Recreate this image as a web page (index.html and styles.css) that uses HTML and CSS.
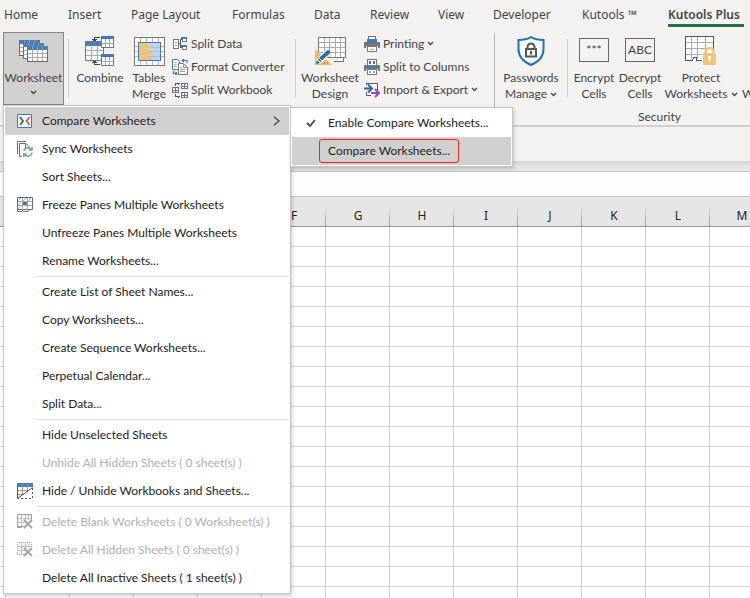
FILE: index.html
```html
<!DOCTYPE html>
<html lang="en">
<head>
<meta charset="utf-8">
<title>Kutools Plus</title>
<link rel="stylesheet" href="styles.css">
</head>
<body>
<nav class="tabs">
  <a href="#">Home</a><a href="#">Insert</a><a href="#">Page Layout</a><a href="#">Formulas</a><a href="#">Data</a><a href="#">Review</a><a href="#">View</a><a href="#">Developer</a><a href="#">Kutools ™</a><a href="#" class="active">Kutools Plus</a>
</nav>

<header class="ribbon">
  <div class="anchor">
    <button class="big pressed" aria-expanded="true">
      <svg class="icon" width="30" height="30" viewBox="0 0 30 30" shape-rendering="crispEdges">
        <g id="sheet"><path fill="#fff" stroke="#6b6b6b" d="M.5 4.500h20v15H.5z"/><path stroke="#aaa" d="M1 11.500h19M1 15.500h19M5.500 8v11M10.500 8v11M15.500 8v11"/><path fill="#4d7fb2" d="M0 4h21v4H0z"/><path stroke="#7ca0c5" d="M5.500 4v4M10.500 4v4M15.500 4v4"/></g>
        <use href="#sheet" x="4" y="3"/><use href="#sheet" x="8" y="6"/>
      </svg>
      <span>Worksheet</span>
      <svg class="chev" width="7" height="5" viewBox="0 0 7 5"><path d="M1 1l2.500 2.500L6 1"/></svg>
    </button>

    <div class="menu" role="menu">
      <div class="anchor">
        <button class="item hot" role="menuitem">
          <svg class="icon" width="16" height="16" viewBox="0 0 16 16"><path fill="#fff" stroke="#3f79b8" d="M.5 1.500h14v13H.5z"/><path fill="none" stroke="#1f7346" stroke-width="1.800" d="M3 4l3 4-3 4"/><path fill="none" stroke="#d9593b" stroke-width="1.800" d="M12.500 4l-3 4 3 4"/></svg>
          <span>Compare Worksheets</span>
          <svg class="more" width="8" height="10" viewBox="0 0 8 10"><path fill="none" stroke="#444" stroke-width="1.300" d="M1 .8L6 5 1 9.200"/></svg>
        </button>
        <div class="menu submenu" role="menu">
          <button class="item" role="menuitemcheckbox" aria-checked="true">
            <svg class="icon" width="16" height="16" viewBox="0 0 16 16"><path fill="none" stroke="#444" stroke-width="1.800" d="M4 8l3 3 5-6"/></svg>
            <span>Enable Compare Worksheets...</span>
          </button>
          <button class="item hot" role="menuitem"><span class="marked">Compare Worksheets...</span></button>
        </div>
      </div>
      <button class="item" role="menuitem">
        <svg class="icon" width="16" height="16" viewBox="0 0 16 16"><path fill="none" stroke="#6b6b6b" d="M.5 13V.5H9M5 15.500H2.500v-13H9L12.500 6M8.500 3v3.500H11"/><g fill="none" stroke="#69a98e" stroke-width="1.500"><path d="M6.800 10a4.300 4.300 0 0 1 7.700-1.500M15 11.500a4.300 4.300 0 0 1-7.700 2"/><path d="M15 6v3h-3M6.800 16v-3h3"/></g></svg>
        <span>Sync Worksheets</span>
      </button>
      <button class="item" role="menuitem"><span>Sort Sheets...</span></button>
      <button class="item" role="menuitem">
        <svg class="icon" width="16" height="16" viewBox="0 0 16 16"><path fill="#fff" stroke="#6b6b6b" d="M.5.5h15v12H.5z"/><path stroke="#9ebbd8" d="M1 4l3-3M1 8l3-3M1 12l3-3M6 4l3-3M11 4l3-3"/><path stroke="#aaa" d="M1 4.500h14M1 8.500h14M5.500 1v12M10.500 1v12"/><path fill="#3f79b8" d="M6 5h4v3H6z"/><path fill="none" stroke="#6b6b6b" d="M.5 12v2.500H5l1-2M6 14.500h5l2-2"/></svg>
        <span>Freeze Panes Multiple Worksheets</span>
      </button>
      <button class="item" role="menuitem"><span>Unfreeze Panes Multiple Worksheets</span></button>
      <button class="item" role="menuitem"><span>Rename Worksheets...</span></button>
      <hr>
      <button class="item" role="menuitem"><span>Create List of Sheet Names...</span></button>
      <button class="item" role="menuitem"><span>Copy Worksheets...</span></button>
      <button class="item" role="menuitem"><span>Create Sequence Worksheets...</span></button>
      <button class="item" role="menuitem"><span>Perpetual Calendar...</span></button>
      <button class="item" role="menuitem"><span>Split Data...</span></button>
      <hr>
      <button class="item" role="menuitem"><span>Hide Unselected Sheets</span></button>
      <button class="item" role="menuitem" disabled><span>Unhide All Hidden Sheets ( 0 sheet(s) )</span></button>
      <button class="item" role="menuitem">
        <svg class="icon" width="16" height="16" viewBox="0 0 16 16"><path fill="#fff" d="M0 0h16v16H0z"/><path stroke="#999" d="M0 7.500h12M0 11.500h7M5.500 4v8M10.500 4v5"/><path fill="none" stroke="#555" d="M.5 4v11.500L15.500 4.500"/><path fill="none" stroke="#555" stroke-dasharray="2 2" d="M15.500 5v10.500H1"/><path fill="#4d7fb2" d="M0 0h16v4H0z"/><path stroke="#7ca0c5" d="M5.500 1v3M10.500 1v3"/></svg>
        <span>Hide / Unhide Workbooks and Sheets...</span>
      </button>
      <hr>
      <button class="item" role="menuitem" disabled>
        <svg class="icon" width="16" height="16" viewBox="0 0 16 16"><path fill="#f4f4f4" stroke="#a6a6a6" d="M7 12.500H.5V.5h14V6M.5 12v1.500H5"/><path stroke="#c4c4c4" d="M1 4.500h13M1 8.500h7M4.500 1v11M8.500 1v6M11.500 1v5"/><path stroke="#a6a6a6" stroke-width="2" d="M7 6l8 8M15 6l-8 8"/></svg>
        <span>Delete Blank Worksheets ( 0 Worksheet(s) )</span>
      </button>
      <button class="item" role="menuitem" disabled>
        <svg class="icon" width="16" height="16" viewBox="0 0 16 16"><path fill="#f4f4f4" stroke="#a6a6a6" stroke-dasharray="1 1" d="M7 12.500H.5V.5h14V6"/><path stroke="#c4c4c4" d="M1 4.500h13M1 8.500h7M4.500 1v11M8.500 1v6M11.500 1v5"/><path stroke="#a6a6a6" stroke-width="2" d="M7 6l8 8M15 6l-8 8"/></svg>
        <span>Delete All Hidden Sheets ( 0 sheet(s) )</span>
      </button>
      <button class="item" role="menuitem"><span>Delete All Inactive Sheets ( 1 sheet(s) )</span></button>
    </div>
  </div>

  <i class="rule"></i>
  <button class="big combine">
    <svg class="icon" width="30" height="30" viewBox="0 0 30 30" shape-rendering="crispEdges">
      <path fill="#f3f7fc" stroke="#777" d="M.5 5.500h18v19H.5z"/><path stroke="#aaa" d="M1 14.500h17M1 19.500h17M6.500 9v15M12.500 9v15"/><path fill="#4d7fb2" d="M0 5h19v5H0z"/>
      <g id="mini"><path fill="#fff" stroke="#777" d="M16.500.5h12v11h-12z"/><path stroke="#aaa" d="M17 7.500h11M20.500 3v8M24.500 3v8"/><path fill="#3f79b8" d="M16 0h13v3H16z"/></g><use href="#mini" y="18"/>
      <path fill="none" stroke="#444" d="M15 1.500H9.500V5M15 28.500H9.500V25"/><path fill="#444" d="M7 3h5v1H7zM8 4h3v1H8zM7 26h5v1H7zM8 25h3v1H8z"/>
    </svg>
    <span>Combine</span>
  </button>
  <button class="big tables">
    <svg class="icon" width="31" height="30" viewBox="0 0 31 30" shape-rendering="crispEdges">
      <path fill="#fff" stroke="#777" d="M.5 1.500h30v28H.5z"/><path stroke="#bbb" d="M1 10.500h29M1 15.500h29M1 20.500h29M6.500 2v27M12.500 2v27M18.500 2v27M24.500 2v27"/><path fill="#c0d5ea" stroke="#3f79b8" d="M4.500 6.500h22v18h-22z"/><path stroke="#a9bfd5" d="M5 11.500h21M5 15.500h21M5 20.500h21"/><path fill="#f0c577" d="M5 7h8v3h4v-1h1v3h-4v4h4v-1h1v4h-5v2h4v3H5z"/>
    </svg>
    <span>Tables<br>Merge</span>
  </button>

  <div class="stack split">
    <button class="small">
      <svg width="16" height="16" viewBox="0 0 16 16" shape-rendering="crispEdges"><path fill="#fff" stroke="#777" d="M1.500 3.500h5v9h-5z"/><path stroke="#3f79b8" d="M1 3.500h2M5 3.500h2"/><path stroke="#999" d="M3 6.500h2M3 9.500h2"/><path fill="none" stroke="#555" d="M7 7.500h1.500M11 3.500H8.500v8H11"/><path fill="#fff" stroke="#777" d="M10.500 1.500h4v4h-4zM10.500 9.500h4v4h-4z"/><path fill="#3f79b8" d="M9 1h6v2H9zM9 9h6v2H9z"/></svg>
      Split Data</button>
    <button class="small">
      <svg width="16" height="16" viewBox="0 0 16 16"><path fill="#fff" stroke="#3f79b8" d="M.5 10.500V.5h5l2 2v8z"/><path stroke="#9ebbd8" d="M2 3.500h3M2 5.500h3M2 7.500h3"/><path fill="#fff" stroke="#777" d="M6.500 4.500h5l4 4v7h-9z"/><path fill="none" stroke="#999" d="M11.500 5v3.500H15M8 8.500h2M8 10.500h5M8 12.500h5"/><path fill="none" stroke="#3f79b8" stroke-width="1.200" d="M15 4V1.500h-4.500M12 0l-1.800 1.500L12 3M1.500 12v2.500H5M3.500 13L5 14.500 3.500 16"/></svg>
      Format Converter</button>
    <button class="small">
      <svg width="16" height="16" viewBox="0 0 16 16" shape-rendering="crispEdges"><g id="wb"><path fill="#fff" stroke="#777" d="M9.500 1.500h6v5h-6zM9.500 4.500h6M12.500 2v5"/><path fill="#3f79b8" d="M9 1h7v1H9z"/></g><use href="#wb" x="-9" y="4"/><use href="#wb" y="9"/><path fill="none" stroke="#555" d="M3.500 4V1.500H8M6 .5v2M3.500 12v2.500H8M6 13.500v2"/></svg>
      Split Workbook</button>
  </div>

  <i class="rule"></i>
  <button class="big design">
    <svg class="icon" width="31" height="30" viewBox="0 0 31 30">
      <g shape-rendering="crispEdges"><path fill="#fff" stroke="#777" d="M3.500 1.500h27v20h-27z"/><path stroke="#aaa" d="M4 6.500h26M4 11.500h26M4 16.500h26M9.500 2v19M14.500 2v19M20.500 2v19M25.500 2v19"/><path fill="#fff" stroke="#777" d="M19 25.500h9.500v-4"/></g>
      <path fill="#ecb96b" d="M0 13l17 16H0z"/><path stroke="#c4903b" d="M6.500 26v2M9.500 26v2M12.500 26v2"/><path stroke="#fff" stroke-width="6" d="M3 26L14 15.500"/><path stroke="#2d6aad" stroke-width="4" d="M4 24.500L14.500 15"/><path fill="#2d6aad" d="M1 28l1-4 3 3z"/><path stroke="#fff" d="M4 22l3 3"/>
    </svg>
    <span>Worksheet<br>Design</span>
  </button>

  <div class="stack print">
    <button class="small">
      <svg width="16" height="16" viewBox="0 0 16 16" shape-rendering="crispEdges"><path fill="#777" d="M0 6h16v6h-2v-2H2v2H0z"/><path fill="#fff" stroke="#777" d="M4.500.5h7v5h-7zM3.500 10.500h9v5h-9z"/><path fill="#3f79b8" d="M3 3h10v4H3z"/><path stroke="#7fa8d1" d="M6 13.500h4"/></svg>
      Printing <svg class="chev" width="7" height="5" viewBox="0 0 7 5"><path d="M1 1l2.500 2.500L6 1"/></svg></button>
    <button class="small">
      <svg width="16" height="16" viewBox="0 0 16 16" shape-rendering="crispEdges"><path fill="#777" d="M0 6h16v6h-2v-2H2v2H0z"/><path fill="#fff" stroke="#777" d="M3.500.5h9v6h-9zM3.500 10.500h9v5h-9z"/><path fill="#3f79b8" d="M5 2h2v3H5zM9 2h2v3H9zM2 7h12v2H2z"/><path fill="#7fa8d1" d="M5 12h2v2H5zM9 12h2v2H9z"/></svg>
      Split to Columns</button>
    <button class="small">
      <svg width="16" height="16" viewBox="0 0 16 16"><path fill="#fff" stroke="#555" d="M2.500 3V1.500h11V8M2.500 10v3.500H7"/><path fill="none" stroke="#2d6aad" stroke-width="2" d="M0 6.500h7M4 2.500l4 4-4 4"/><path fill="none" stroke="#8a50ad" stroke-width="2" d="M7 11h7.500M11 7l4 4-4 4"/></svg>
      Import &amp; Export <svg class="chev" width="7" height="5" viewBox="0 0 7 5"><path d="M1 1l2.500 2.500L6 1"/></svg></button>
  </div>

  <i class="rule tall"></i>
  <section class="group">
    <div class="row">
      <button class="big passwords">
        <svg class="icon" width="28" height="30" viewBox="0 0 28 30"><path fill="#f8fbfe" stroke="#1e73be" stroke-width="2" d="M14 1.200C10 3.500 6 4 1.500 4v9c0 8 5.500 13 12.500 16 7-3 12.500-8 12.500-16V4C22 4 18 3.500 14 1.200z"/><path fill="none" stroke="#555" stroke-width="2" d="M9 13h10v7.500H9zM10.500 13v-2a3.500 3.500 0 0 1 7 0v2"/><path stroke="#555" stroke-width="2" d="M14 15v3.500"/></svg>
        <span>Passwords<br>Manage <svg class="chev" width="7" height="5" viewBox="0 0 7 5"><path d="M1 1l2.500 2.500L6 1"/></svg></span>
      </button>
      <i class="rule"></i>
      <button class="big encrypt"><b class="tile">***</b><span>Encrypt<br>Cells</span></button>
      <button class="big encrypt"><b class="tile">ABC</b><span>Decrypt<br>Cells</span></button>
      <button class="big protect">
        <svg class="icon" width="32" height="30" viewBox="0 0 32 30"><g shape-rendering="crispEdges"><path fill="#fff" d="M0 0h29v24H0z"/><path stroke="#aaa" d="M1 6.500h28M1 12.500h28M1 18.500h28M6.500 1v22M12.500 1v22M20.500 1v22"/><path fill="none" stroke="#555" d="M28.500 14V.5H.5v24H7l2-3h2v3h6"/></g><path fill="#efc57c" stroke="#fff" d="M17.500 16.500h14v13h-14z"/><path fill="none" stroke="#efc57c" stroke-width="2.500" d="M20.500 18v-2a4 4 0 0 1 8 0v2"/><path fill="#fff" d="M23 20h3v3h-1v4h-1v-4h-1z"/></svg>
        <span>Protect<br>Worksheets <svg class="chev" width="7" height="5" viewBox="0 0 7 5"><path d="M1 1l2.500 2.500L6 1"/></svg></span>
      </button>
      <button class="big next"><span><br>W</span></button>
    </div>
    <p>Security</p>
  </section>
</header>

<div class="toolbar"></div>
<div class="formula"></div>
<table class="sheet">
  <thead><tr><th class="edge"></th><th></th><th></th><th></th><th></th><th>F</th><th>G</th><th>H</th><th>I</th><th>J</th><th>K</th><th>L</th><th>M</th></tr></thead>
  <tbody id="cells"></tbody>
</table>
<script src="sheet.js"></script>
</body>
</html>
```
FILE: sheet.js
```js
// Fill the rest of the window with empty rows.
const body = document.getElementById("cells");
const free = window.innerHeight - body.getBoundingClientRect().top;
const rows = Math.ceil(free / 20);
for (let r = 0; r < rows; r++) {
  const row = body.insertRow();
  for (let c = 0; c < 13; c++) row.insertCell();
}
```
FILE: styles.css
```css
* { box-sizing: border-box; }
body {
  margin: 0;
  height: 100vh;
  overflow: hidden;
  background: #fff;
  color: #444;
  font: 12px/16px Lato, "Noto Sans", sans-serif;
}
button {
  margin: 0;
  padding: 0;
  border: 0;
  background: none;
  color: inherit;
  font: inherit;
  white-space: nowrap;
}
svg { flex: none; }
.anchor { position: relative; }
.chev {
  fill: none;
  stroke: #444;
  stroke-width: 1.3;
  vertical-align: middle;
}

.tabs {
  display: grid;
  grid-template-columns: 64px 63px 101px 82px 56px 68px 55px 89px 86px 76px;
  height: 32px;
  padding: 5px 0 5px 4px;
  background: #f3f2f1;
  font-family: "Noto Sans", sans-serif;
  white-space: nowrap;
}
.tabs a {
  color: #444;
  line-height: 20px;
  text-decoration: none;
}
.tabs .active {
  height: 22px;
  border-bottom: 3px solid #217346;
  font-weight: 600;
}

.ribbon {
  display: flex;
  height: 95px;
  padding-left: 3px;
  border-bottom: 2px solid #d2d0ce;
  background: #f3f2f1;
}
.big {
  display: flex;
  flex: none;
  flex-direction: column;
  align-items: center;
  gap: 4px;
  padding-top: 4px;
}
.pressed {
  width: 61px;
  height: 73px;
  padding-top: 3px;
  border: 1px solid #888;
  background: #d2d0ce;
}
.combine { width: 62px; }
.tables { width: 36px; }
.design { width: 68px; }
.passwords { width: 72px; }
.encrypt { width: 46px; }
.rule + .encrypt { margin-left: 3px; }
.protect { width: 76px; }
.next { align-items: flex-start; padding: 38px 0 0 3px; }
.rule {
  flex: none;
  width: 1px;
  height: 59px;
  margin-top: 7px;
  background: #d2d0ce;
}
.anchor + .rule { margin-left: 4px; }
.rule.tall { height: 88px; margin-top: 1px; background: #b8b6b4; }
.stack {
  display: flex;
  flex-direction: column;
}
.split { width: 128px; padding-left: 5px; }
.print { width: 130px; }
.split, .print, .design { flex: none; }
.small {
  display: flex;
  align-items: center;
  gap: 3px;
  height: 23px;
}
.tile {
  width: 30px;
  height: 24px;
  margin: 2px 0 4px;
  border: 1px solid #666;
  font-weight: 400;
  line-height: 22px;
  text-align: center;
}
.row { display: flex; }
.group p {
  width: 329px;
  margin: 7px 0 0;
  text-align: center;
}

.menu {
  position: absolute;
  z-index: 2;
  top: 73px;
  left: 0;
  width: 288px;
  padding: 1px;
  border: 1px solid #c6c6c6;
  background: #fff;
  box-shadow: 1px 2px 4px rgba(0, 0, 0, .2);
  color: #222;
}
.submenu {
  top: 0;
  left: 285px;
  width: 223px;
}
.item {
  display: flex;
  align-items: center;
  width: 100%;
  height: 28px;
  padding-left: 37px;
}
.item .icon { margin: 0 9px 0 -25px; }
.item .more { margin: 0 8px 0 auto; }
.item:disabled { color: #b1b1b1; }
.hot { background: #d2d0ce; }
.submenu .item { padding-left: 36px; }
.marked {
  margin-left: -9px;
  padding: 3px 8px;
  border: 1px solid #f3241c;
  border-radius: 3px;
}
.menu hr {
  margin: 1px 0 1px 32px;
  border: 0;
  border-top: 1px solid #dcdcdc;
}

.toolbar {
  height: 45px;
  border-bottom: 1px solid #c6c6c6;
  background: linear-gradient(#f3f2f1 34px, #d4d4d4 34px, #e6e6e6 40px);
}
.formula {
  height: 25px;
  border-bottom: 1px solid #c6c6c6;
  background: #fdfdfd;
}
.sheet {
  width: 774px;
  table-layout: fixed;
  border-spacing: 0;
}
.sheet th {
  height: 30px;
  padding: 9px 0 0;
  border-bottom: 1px solid #999;
  background: linear-gradient(#e6e6e6, #999) right bottom / 1px 20px no-repeat #e6e6e6;
  color: #222;
  font-family: "Noto Sans", sans-serif;
  font-weight: 400;
}
.sheet .edge { width: 6px; }
.sheet td {
  height: 20px;
  padding: 0;
  border-right: 1px solid #d4d4d4;
  border-bottom: 1px solid #d4d4d4;
}
```
